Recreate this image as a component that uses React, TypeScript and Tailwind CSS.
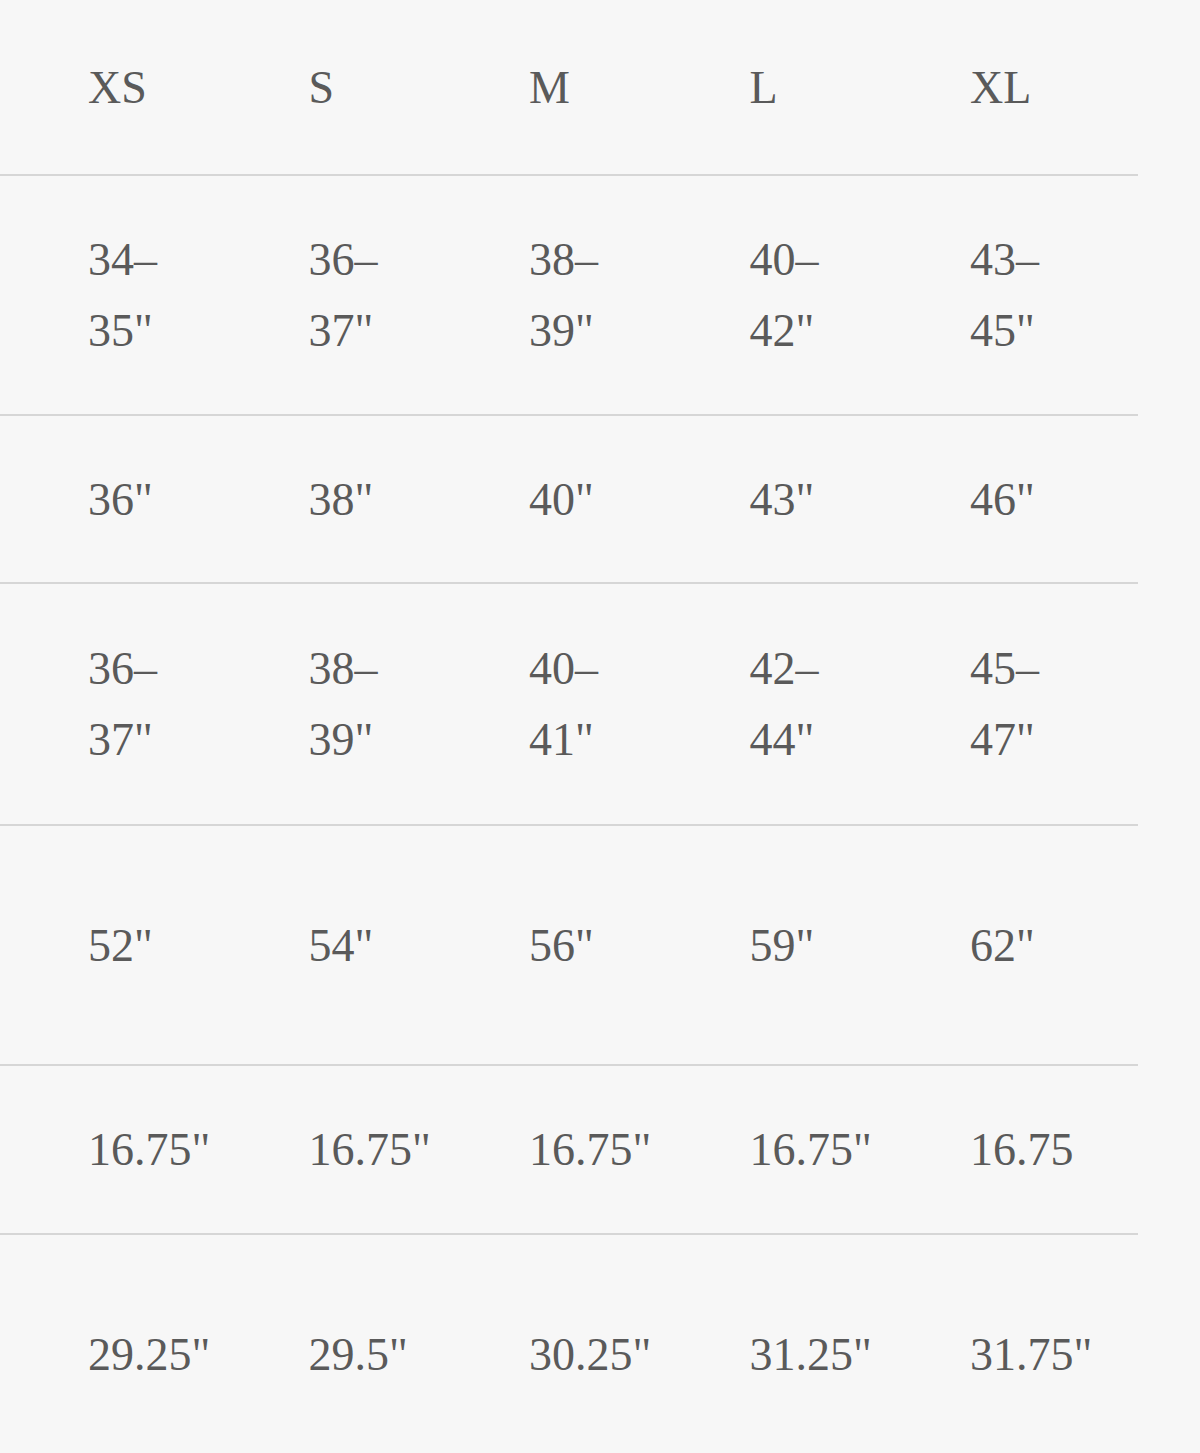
import React from 'react';

const sizes = ['XS', 'S', 'M', 'L', 'XL'];

const rows: { h: string; cells: string[][] }[] = [
    { h: 'h-[240px]', cells: [['34–', '35"'], ['36–', '37"'], ['38–', '39"'], ['40–', '42"'], ['43–', '45"']] },
    { h: 'h-[168px]', cells: [['36"'], ['38"'], ['40"'], ['43"'], ['46"']] },
    { h: 'h-[242px]', cells: [['36–', '37"'], ['38–', '39"'], ['40–', '41"'], ['42–', '44"'], ['45–', '47"']] },
    { h: 'h-[240px]', cells: [['52"'], ['54"'], ['56"'], ['59"'], ['62"']] },
    { h: 'h-[169px]', cells: [['16.75"'], ['16.75"'], ['16.75"'], ['16.75"'], ['16.75']] },
    { h: 'h-[240px]', cells: [['29.25"'], ['29.5"'], ['30.25"'], ['31.25"'], ['31.75"']] },
];

export default function App() {
    return (
        <div className="w-[1200px] h-[1453px] overflow-hidden bg-[#f7f7f7] text-[#5a5a5a] text-[46px] leading-[71px] font-['Liberation_Serif',serif]">
            <div className="w-[1138px]">
                {/* Header */}
                <div className="flex items-center h-[176px] pl-[88px] border-b-2 border-[#d6d6d6]">
                    {sizes.map((s) => (
                        <div key={s} className="w-[220.5px] shrink-0">{s}</div>
                    ))}
                </div>

                {rows.map((row, i) => (
                    <div key={i} className={`flex items-center pl-[88px] border-b-2 border-[#d6d6d6] ${row.h}`}>
                        {row.cells.map((lines, j) => (
                            <div key={j} className="w-[220.5px] shrink-0 whitespace-nowrap">
                                {lines.map((l, k) => (
                                    <div key={k}>{l}</div>
                                ))}
                            </div>
                        ))}
                    </div>
                ))}
            </div>
        </div>
    );
}
